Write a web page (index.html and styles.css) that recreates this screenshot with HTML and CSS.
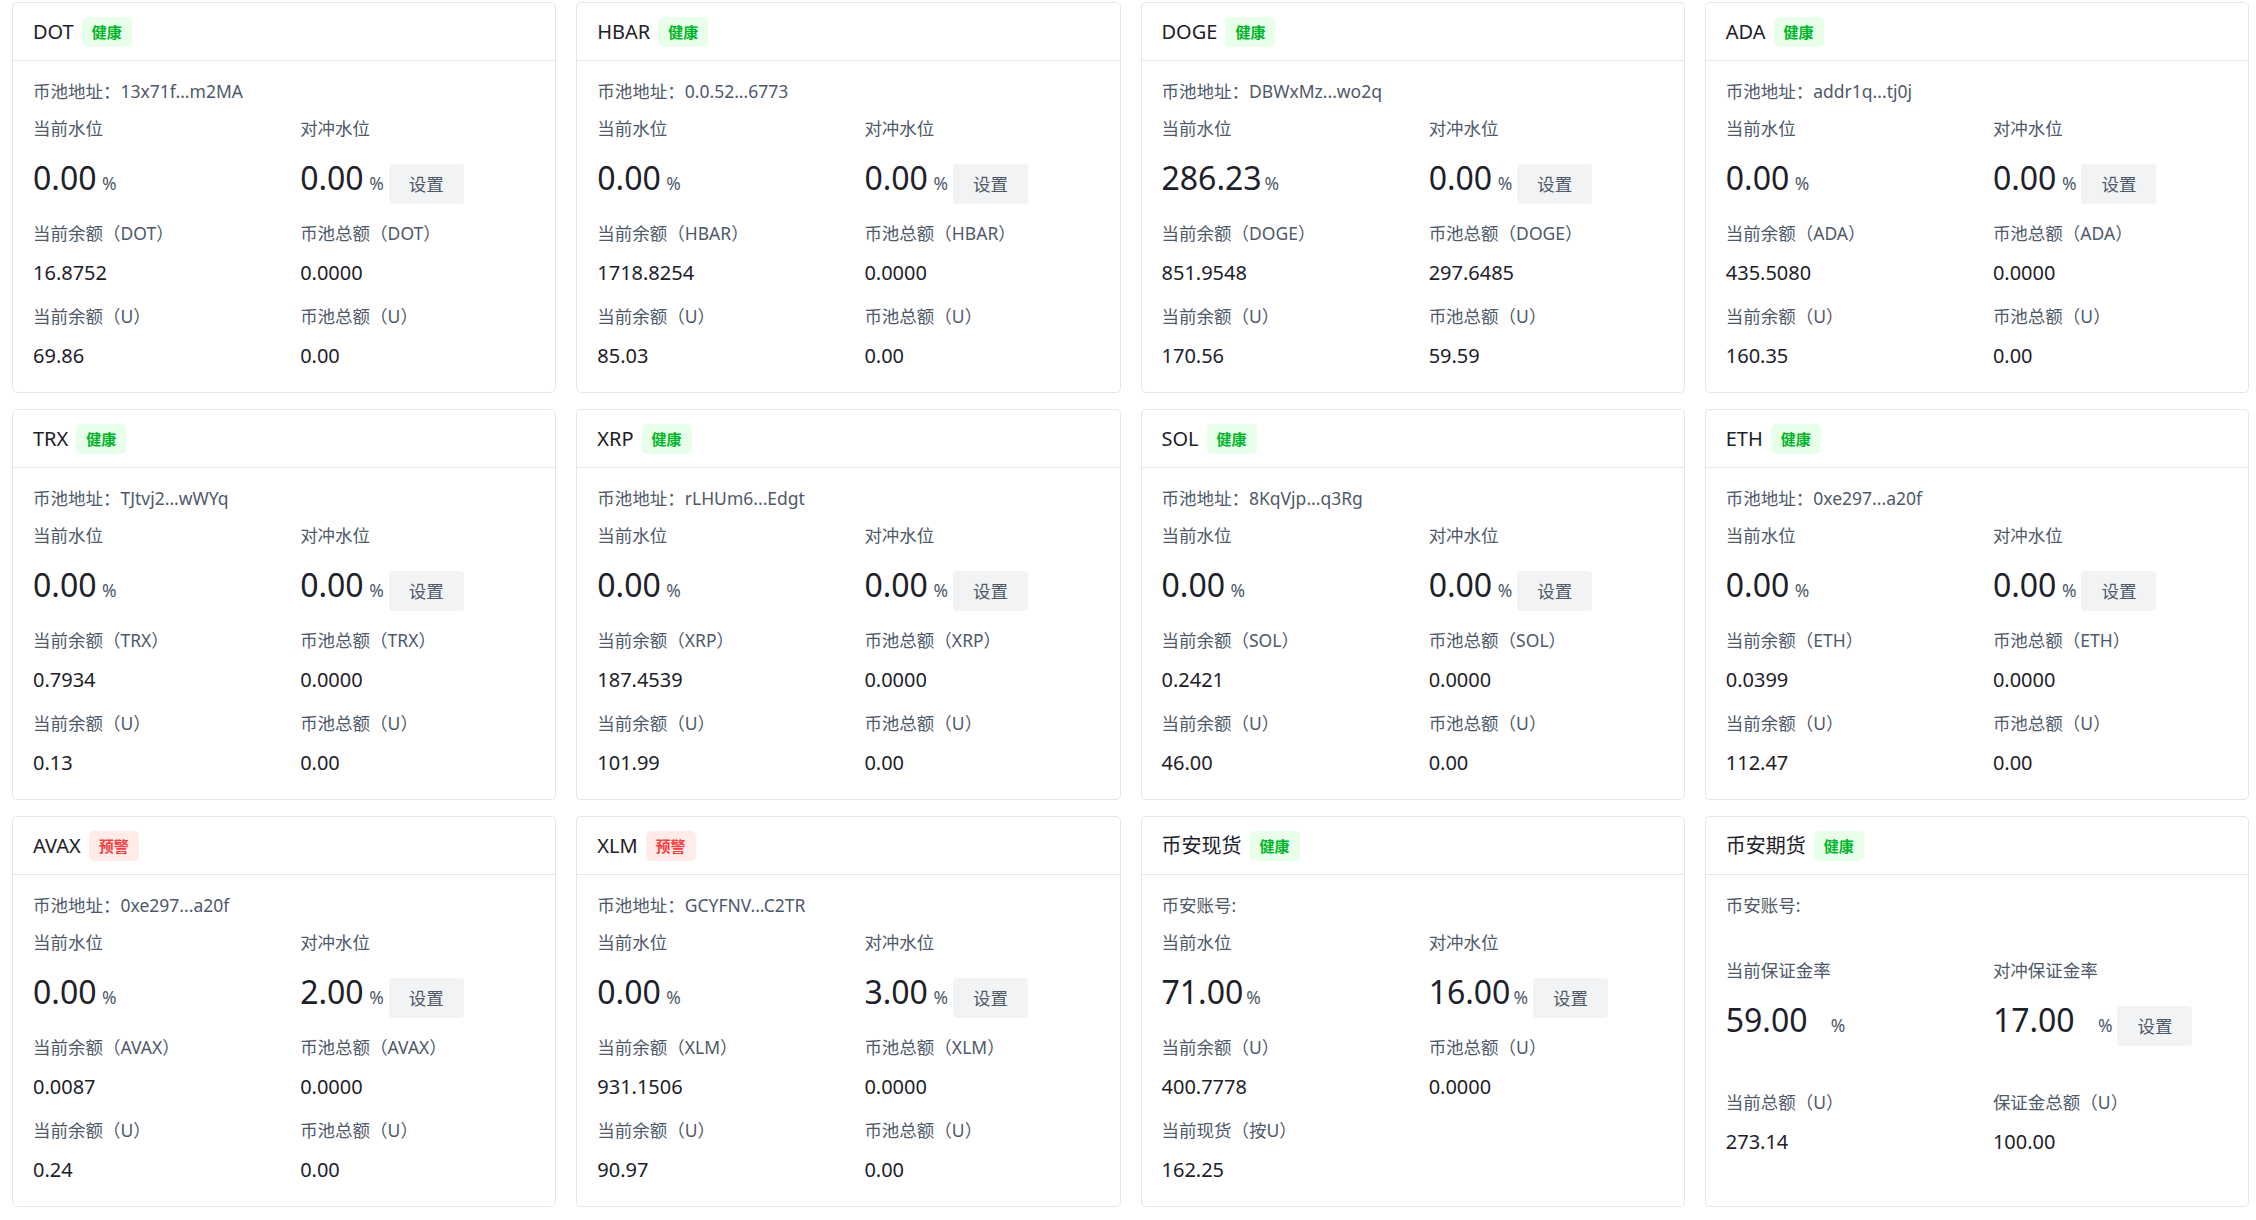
FILE: index.html
```html
<!DOCTYPE html>
<html lang="zh-CN">
<head>
<meta charset="utf-8">
<title>币池监控</title>
<link rel="stylesheet" href="styles.css">
</head>
<body>
<div class="page">
  <div class="cards">

    <div class="card">
      <div class="card-head"><span class="title">DOT</span><span class="tag ok">健康</span></div>
      <div class="card-body">
        <div class="addr">币池地址：13x71f...m2MA</div>
        <div class="grid">
          <div class="stat stat-big"><div class="label">当前水位</div><div class="big-row"><span class="big"><span class="num">0.00</span><span class="pct">%</span></span></div></div>
          <div class="stat stat-big"><div class="label">对冲水位</div><div class="big-row"><span class="big"><span class="num">0.00</span><span class="pct">%</span></span><button class="btn">设置</button></div></div>
          <div class="stat"><div class="label">当前余额（DOT）</div><div class="val">16.8752</div></div>
          <div class="stat"><div class="label">币池总额（DOT）</div><div class="val">0.0000</div></div>
          <div class="stat"><div class="label">当前余额（U）</div><div class="val">69.86</div></div>
          <div class="stat"><div class="label">币池总额（U）</div><div class="val">0.00</div></div>
        </div>
      </div>
    </div>

    <div class="card">
      <div class="card-head"><span class="title">HBAR</span><span class="tag ok">健康</span></div>
      <div class="card-body">
        <div class="addr">币池地址：0.0.52...6773</div>
        <div class="grid">
          <div class="stat stat-big"><div class="label">当前水位</div><div class="big-row"><span class="big"><span class="num">0.00</span><span class="pct">%</span></span></div></div>
          <div class="stat stat-big"><div class="label">对冲水位</div><div class="big-row"><span class="big"><span class="num">0.00</span><span class="pct">%</span></span><button class="btn">设置</button></div></div>
          <div class="stat"><div class="label">当前余额（HBAR）</div><div class="val">1718.8254</div></div>
          <div class="stat"><div class="label">币池总额（HBAR）</div><div class="val">0.0000</div></div>
          <div class="stat"><div class="label">当前余额（U）</div><div class="val">85.03</div></div>
          <div class="stat"><div class="label">币池总额（U）</div><div class="val">0.00</div></div>
        </div>
      </div>
    </div>

    <div class="card">
      <div class="card-head"><span class="title">DOGE</span><span class="tag ok">健康</span></div>
      <div class="card-body">
        <div class="addr">币池地址：DBWxMz...wo2q</div>
        <div class="grid">
          <div class="stat stat-big"><div class="label">当前水位</div><div class="big-row"><span class="big"><span class="num">286.23</span><span class="pct">%</span></span></div></div>
          <div class="stat stat-big"><div class="label">对冲水位</div><div class="big-row"><span class="big"><span class="num">0.00</span><span class="pct">%</span></span><button class="btn">设置</button></div></div>
          <div class="stat"><div class="label">当前余额（DOGE）</div><div class="val">851.9548</div></div>
          <div class="stat"><div class="label">币池总额（DOGE）</div><div class="val">297.6485</div></div>
          <div class="stat"><div class="label">当前余额（U）</div><div class="val">170.56</div></div>
          <div class="stat"><div class="label">币池总额（U）</div><div class="val">59.59</div></div>
        </div>
      </div>
    </div>

    <div class="card">
      <div class="card-head"><span class="title">ADA</span><span class="tag ok">健康</span></div>
      <div class="card-body">
        <div class="addr">币池地址：addr1q...tj0j</div>
        <div class="grid">
          <div class="stat stat-big"><div class="label">当前水位</div><div class="big-row"><span class="big"><span class="num">0.00</span><span class="pct">%</span></span></div></div>
          <div class="stat stat-big"><div class="label">对冲水位</div><div class="big-row"><span class="big"><span class="num">0.00</span><span class="pct">%</span></span><button class="btn">设置</button></div></div>
          <div class="stat"><div class="label">当前余额（ADA）</div><div class="val">435.5080</div></div>
          <div class="stat"><div class="label">币池总额（ADA）</div><div class="val">0.0000</div></div>
          <div class="stat"><div class="label">当前余额（U）</div><div class="val">160.35</div></div>
          <div class="stat"><div class="label">币池总额（U）</div><div class="val">0.00</div></div>
        </div>
      </div>
    </div>

    <div class="card">
      <div class="card-head"><span class="title">TRX</span><span class="tag ok">健康</span></div>
      <div class="card-body">
        <div class="addr">币池地址：TJtvj2...wWYq</div>
        <div class="grid">
          <div class="stat stat-big"><div class="label">当前水位</div><div class="big-row"><span class="big"><span class="num">0.00</span><span class="pct">%</span></span></div></div>
          <div class="stat stat-big"><div class="label">对冲水位</div><div class="big-row"><span class="big"><span class="num">0.00</span><span class="pct">%</span></span><button class="btn">设置</button></div></div>
          <div class="stat"><div class="label">当前余额（TRX）</div><div class="val">0.7934</div></div>
          <div class="stat"><div class="label">币池总额（TRX）</div><div class="val">0.0000</div></div>
          <div class="stat"><div class="label">当前余额（U）</div><div class="val">0.13</div></div>
          <div class="stat"><div class="label">币池总额（U）</div><div class="val">0.00</div></div>
        </div>
      </div>
    </div>

    <div class="card">
      <div class="card-head"><span class="title">XRP</span><span class="tag ok">健康</span></div>
      <div class="card-body">
        <div class="addr">币池地址：rLHUm6...Edgt</div>
        <div class="grid">
          <div class="stat stat-big"><div class="label">当前水位</div><div class="big-row"><span class="big"><span class="num">0.00</span><span class="pct">%</span></span></div></div>
          <div class="stat stat-big"><div class="label">对冲水位</div><div class="big-row"><span class="big"><span class="num">0.00</span><span class="pct">%</span></span><button class="btn">设置</button></div></div>
          <div class="stat"><div class="label">当前余额（XRP）</div><div class="val">187.4539</div></div>
          <div class="stat"><div class="label">币池总额（XRP）</div><div class="val">0.0000</div></div>
          <div class="stat"><div class="label">当前余额（U）</div><div class="val">101.99</div></div>
          <div class="stat"><div class="label">币池总额（U）</div><div class="val">0.00</div></div>
        </div>
      </div>
    </div>

    <div class="card">
      <div class="card-head"><span class="title">SOL</span><span class="tag ok">健康</span></div>
      <div class="card-body">
        <div class="addr">币池地址：8KqVjp...q3Rg</div>
        <div class="grid">
          <div class="stat stat-big"><div class="label">当前水位</div><div class="big-row"><span class="big"><span class="num">0.00</span><span class="pct">%</span></span></div></div>
          <div class="stat stat-big"><div class="label">对冲水位</div><div class="big-row"><span class="big"><span class="num">0.00</span><span class="pct">%</span></span><button class="btn">设置</button></div></div>
          <div class="stat"><div class="label">当前余额（SOL）</div><div class="val">0.2421</div></div>
          <div class="stat"><div class="label">币池总额（SOL）</div><div class="val">0.0000</div></div>
          <div class="stat"><div class="label">当前余额（U）</div><div class="val">46.00</div></div>
          <div class="stat"><div class="label">币池总额（U）</div><div class="val">0.00</div></div>
        </div>
      </div>
    </div>

    <div class="card">
      <div class="card-head"><span class="title">ETH</span><span class="tag ok">健康</span></div>
      <div class="card-body">
        <div class="addr">币池地址：0xe297...a20f</div>
        <div class="grid">
          <div class="stat stat-big"><div class="label">当前水位</div><div class="big-row"><span class="big"><span class="num">0.00</span><span class="pct">%</span></span></div></div>
          <div class="stat stat-big"><div class="label">对冲水位</div><div class="big-row"><span class="big"><span class="num">0.00</span><span class="pct">%</span></span><button class="btn">设置</button></div></div>
          <div class="stat"><div class="label">当前余额（ETH）</div><div class="val">0.0399</div></div>
          <div class="stat"><div class="label">币池总额（ETH）</div><div class="val">0.0000</div></div>
          <div class="stat"><div class="label">当前余额（U）</div><div class="val">112.47</div></div>
          <div class="stat"><div class="label">币池总额（U）</div><div class="val">0.00</div></div>
        </div>
      </div>
    </div>

    <div class="card">
      <div class="card-head"><span class="title">AVAX</span><span class="tag warn">预警</span></div>
      <div class="card-body">
        <div class="addr">币池地址：0xe297...a20f</div>
        <div class="grid">
          <div class="stat stat-big"><div class="label">当前水位</div><div class="big-row"><span class="big"><span class="num">0.00</span><span class="pct">%</span></span></div></div>
          <div class="stat stat-big"><div class="label">对冲水位</div><div class="big-row"><span class="big"><span class="num">2.00</span><span class="pct">%</span></span><button class="btn">设置</button></div></div>
          <div class="stat"><div class="label">当前余额（AVAX）</div><div class="val">0.0087</div></div>
          <div class="stat"><div class="label">币池总额（AVAX）</div><div class="val">0.0000</div></div>
          <div class="stat"><div class="label">当前余额（U）</div><div class="val">0.24</div></div>
          <div class="stat"><div class="label">币池总额（U）</div><div class="val">0.00</div></div>
        </div>
      </div>
    </div>

    <div class="card">
      <div class="card-head"><span class="title">XLM</span><span class="tag warn">预警</span></div>
      <div class="card-body">
        <div class="addr">币池地址：GCYFNV...C2TR</div>
        <div class="grid">
          <div class="stat stat-big"><div class="label">当前水位</div><div class="big-row"><span class="big"><span class="num">0.00</span><span class="pct">%</span></span></div></div>
          <div class="stat stat-big"><div class="label">对冲水位</div><div class="big-row"><span class="big"><span class="num">3.00</span><span class="pct">%</span></span><button class="btn">设置</button></div></div>
          <div class="stat"><div class="label">当前余额（XLM）</div><div class="val">931.1506</div></div>
          <div class="stat"><div class="label">币池总额（XLM）</div><div class="val">0.0000</div></div>
          <div class="stat"><div class="label">当前余额（U）</div><div class="val">90.97</div></div>
          <div class="stat"><div class="label">币池总额（U）</div><div class="val">0.00</div></div>
        </div>
      </div>
    </div>

    <div class="card">
      <div class="card-head"><span class="title">币安现货</span><span class="tag ok">健康</span></div>
      <div class="card-body">
        <div class="addr">币安账号:</div>
        <div class="grid">
          <div class="stat stat-big"><div class="label">当前水位</div><div class="big-row"><span class="big"><span class="num">71.00</span><span class="pct">%</span></span></div></div>
          <div class="stat stat-big"><div class="label">对冲水位</div><div class="big-row"><span class="big"><span class="num">16.00</span><span class="pct">%</span></span><button class="btn">设置</button></div></div>
          <div class="stat"><div class="label">当前余额（U）</div><div class="val">400.7778</div></div>
          <div class="stat"><div class="label">币池总额（U）</div><div class="val">0.0000</div></div>
          <div class="stat"><div class="label">当前现货（按U）</div><div class="val">162.25</div></div>
        </div>
      </div>
    </div>

    <div class="card">
      <div class="card-head"><span class="title">币安期货</span><span class="tag ok">健康</span></div>
      <div class="card-body">
        <div class="addr">币安账号:</div>
        <div class="grid grid-fut">
          <div class="stat stat-big"><div class="label">当前保证金率</div><div class="big-row"><span class="big"><span class="num num-wide">59.00</span><span class="pct">%</span></span></div></div>
          <div class="stat stat-big"><div class="label">对冲保证金率</div><div class="big-row"><span class="big"><span class="num num-wide">17.00</span><span class="pct">%</span></span><button class="btn">设置</button></div></div>
          <div class="stat"><div class="label">当前总额（U）</div><div class="val">273.14</div></div>
          <div class="stat"><div class="label">保证金总额（U）</div><div class="val">100.00</div></div>
        </div>
      </div>
    </div>

  </div>
</div>
</body>
</html>
```

FILE: styles.css
```css
* {
  box-sizing: border-box;
}

html, body {
  margin: 0;
  padding: 0;
  background: #ffffff;
}

body {
  font-family: "Noto Sans", "Noto Sans CJK SC", sans-serif;
  font-size: 17.5px;
  color: #1d2129;
}

.page {
  padding: 2px 7px 0 12px;
}

.cards {
  display: grid;
  grid-template-columns: repeat(4, 1fr);
  gap: 16px 20px;
}

.card {
  border: 1px solid #e5e6eb;
  border-radius: 5px;
  background: #fff;
  display: flex;
  flex-direction: column;
}

.card-head {
  height: 58px;
  border-bottom: 1px solid #e5e6eb;
  padding: 0 20px;
  display: flex;
  align-items: center;
  gap: 8px;
}

.title {
  font-size: 20px;
  line-height: 28px;
  color: #1d2129;
}

.tag {
  height: 30px;
  padding: 0 10px;
  border-radius: 5px;
  font-family: "Noto Sans CJK SC", sans-serif;
  font-size: 15px;
  font-weight: 600;
  line-height: 30px;
  display: inline-flex;
  align-items: center;
}

.tag.ok {
  background: #e8ffea;
  color: #00b42a;
}

.tag.warn {
  background: #ffece8;
  color: #f53f3f;
}

.card-body {
  padding: 16px 20px 22px;
}

.addr {
  line-height: 28px;
  color: #4e5969;
}

.grid {
  margin-top: 9px;
  display: grid;
  grid-template-columns: 1fr 1fr;
  column-gap: 32px;
  row-gap: 15px;
}

.grid-fut {
  margin-top: 37px;
  row-gap: 42px;
}

.stat {
  display: flex;
  flex-direction: column;
  gap: 12px;
}

.stat-big {
  gap: 22px;
}

.label {
  line-height: 28px;
  color: #4e5969;
  white-space: nowrap;
}

.val {
  font-size: 20px;
  line-height: 28px;
  color: #1d2129;
}

.big-row {
  height: 40px;
  display: flex;
  align-items: flex-start;
}

.big {
  display: flex;
  align-items: baseline;
  line-height: 28px;
}

.num {
  font-size: 32px;
  min-width: 66px;
  color: #1d2129;
}

.num-wide {
  min-width: 102px;
}

.pct {
  margin-left: 3px;
  font-size: 17.5px;
  color: #4e5969;
}

.btn {
  margin-left: 5px;
  height: 40px;
  padding: 0 20px;
  border: 0;
  border-radius: 4px;
  background: #f2f3f5;
  color: #4e5969;
  font-family: "Noto Sans", "Noto Sans CJK SC", sans-serif;
  font-size: 17.5px;
  line-height: 40px;
  cursor: pointer;
}
```
